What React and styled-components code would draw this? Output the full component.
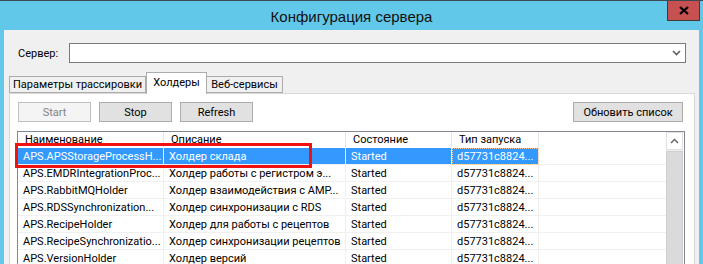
import React from 'react'
import styled, { createGlobalStyle } from 'styled-components'

const GlobalStyle = createGlobalStyle`
body {
  margin: 0;
  font-family: Roboto, "Liberation Sans", Arial, sans-serif;
}
`

const Window = styled.div`
width: 703px;
height: 264px;
overflow: hidden;
background: #62c8e9;
border-top: 1px solid #3c4a50;
box-sizing: border-box;
display: flex;
flex-direction: column;
`
const TitleBar = styled.div`
height: 29px;
display: grid;
grid-template-columns: 1fr auto 1fr;
flex-shrink: 0;
`
const Title = styled.div`
grid-column: 2;
align-self: center;
font-family: "Liberation Sans", Arial, sans-serif;
font-size: 15px;
color: #111;
padding-top: 1px;
`
const CloseButton = styled.div`
grid-column: 3;
justify-self: end;
align-self: start;
width: 31px;
height: 19px;
margin-right: 3px;
background: #c75050;
border: 1px solid #3b3b3b;
border-top: none;
display: flex;
align-items: center;
justify-content: center;
`
const Client = styled.div`
flex: 1;
margin: 0 4px;
background: #f0f0f0;
padding-top: 13px;
display: flex;
flex-direction: column;
font-size: 11px;
color: #000;
`
const ServerRow = styled.div`
display: grid;
grid-template-columns: 51px 1fr;
align-items: center;
padding: 0 13px 0 14px;
`
const Label = styled.span`
font-size: 11px;
`
const Combo = styled.div`
height: 18px;
border: 1px solid #7a7a7a;
background: #fff;
display: flex;
justify-content: flex-end;
align-items: center;
padding-right: 4px;
`
const TabStrip = styled.div`
display: flex;
align-items: flex-end;
height: 21px;
margin-top: 9px;
padding-left: 5px;
position: relative;
z-index: 1;
`
const Tab = styled.div`
box-sizing: border-box;
width: ${p => p.w}px;
height: ${p => (p.active ? 22 : 17)}px;
margin-bottom: ${p => (p.active ? -1 : 0)}px;
border: 1px solid #acacac;
border-bottom: ${p => (p.active ? 'none' : '1px solid #acacac')};
border-left: ${p => (p.first || p.active ? '1px solid #acacac' : 'none')};
background: ${p => (p.active ? '#ffffff' : '#f0f0f0')};
font-size: 11px;
white-space: nowrap;
display: flex;
align-items: ${p => (p.active ? 'flex-start' : 'center')};
padding-top: ${p => (p.active ? 3 : 0)}px;
justify-content: center;
`
const Panel = styled.div`
flex: 1;
margin: 0 4px 0 5px;
border: 1px solid #d9d9d9;
border-bottom: none;
background: #ffffff;
padding: 8px 9px 0 7px;
display: flex;
flex-direction: column;
`
const Toolbar = styled.div`
display: flex;
gap: 8px;
margin: 0 2px 0 1px;
`
const Spacer = styled.div`
flex: 1;
`
const Button = styled.div`
box-sizing: border-box;
width: ${p => p.w || 73}px;
height: 20px;
border: 1px solid ${p => (p.disabled ? '#bfbfbf' : '#adadad')};
background: ${p => (p.disabled ? '#f4f4f4' : '#e1e1e1')};
color: ${p => (p.disabled ? '#838383' : '#000')};
font-size: 11px;
white-space: nowrap;
display: flex;
align-items: center;
justify-content: center;
`
const ListWrap = styled.div`
position: relative;
margin-top: 9px;
flex: 1;
`
const List = styled.div`
height: 100%;
border: 1px solid #828790;
border-bottom: none;
background: #fff;
display: flex;
`
const Table = styled.div`
flex: 1;
`
const Row = styled.div`
display: grid;
grid-template-columns: 146px 182px 106px 87px 1fr;
height: ${p => (p.header ? 16 : 17)}px;
`
const Cell = styled.div`
box-sizing: border-box;
padding-left: ${p => (p.header ? 7 : 5)}px;
border-right: 1px solid ${p => (p.header ? '#e5e5e5' : '#f0f0f0')};
border-bottom: 1px solid ${p => (p.header ? 'transparent' : '#f0f0f0')};
background: ${p => (p.selected ? '#3399ff' : '#fff')};
color: ${p => (p.selected ? '#fff' : '#000')};
font-size: 11px;
white-space: nowrap;
overflow: hidden;
display: flex;
align-items: center;
outline: ${p => (p.focus ? '1px dotted #ffc890' : 'none')};
outline-offset: -1px;
`
const Filler = styled.div`
border-bottom: 1px solid ${p => (p.header ? 'transparent' : '#f0f0f0')};
`
const ScrollBar = styled.div`
width: 17px;
margin-right: 1px;
background: #f0f0f0;
display: flex;
flex-direction: column;
`
const ArrowBox = styled.div`
height: 16px;
border: 1px solid #e0e0e0;
background: #fff;
display: flex;
align-items: center;
justify-content: center;
`
const Thumb = styled.div`
flex: 1;
margin: 1px 0 0 0;
background: #dadada;
border: 1px solid #cfcfcf;
`
const Highlight = styled.div`
position: absolute;
left: -2px;
top: 12px;
width: 297px;
height: 25px;
box-sizing: border-box;
border: 3px solid #f01010;
pointer-events: none;
`

const rows = [
  ['APS.APSStorageProcessH...', 'Холдер склада'],
  ['APS.EMDRIntegrationProc...', 'Холдер работы с регистром э...'],
  ['APS.RabbitMQHolder', 'Холдер взаимодействия с AMP...'],
  ['APS.RDSSynchronization...', 'Холдер синхронизации с RDS'],
  ['APS.RecipeHolder', 'Холдер для работы с рецептов'],
  ['APS.RecipeSynchronizatio...', 'Холдер синхронизации рецептов'],
  ['APS.VersionHolder', 'Холдер версий'],
]

export default function App() {
  return (
    <>
      <GlobalStyle />
      <Window>
        <TitleBar>
          <Title>Конфигурация сервера</Title>
          <CloseButton>
            <svg width="10" height="9" viewBox="0 0 10 9">
              <path d="M1 1 L9 8 M9 1 L1 8" stroke="#000" strokeWidth="2.2" />
            </svg>
          </CloseButton>
        </TitleBar>
        <Client>
          <ServerRow>
            <Label>Сервер:</Label>
            <Combo>
              <svg width="9" height="6" viewBox="0 0 9 6">
                <path d="M1 1 L4.5 4.5 L8 1" stroke="#606060" strokeWidth="1.6" fill="none" />
              </svg>
            </Combo>
          </ServerRow>
          <TabStrip>
            <Tab w={137} first>Параметры трассировки</Tab>
            <Tab w={61} active>Холдеры</Tab>
            <Tab w={76}>Веб-сервисы</Tab>
          </TabStrip>
          <Panel>
            <Toolbar>
              <Button disabled>Start</Button>
              <Button>Stop</Button>
              <Button>Refresh</Button>
              <Spacer />
              <Button w={110}>Обновить список</Button>
            </Toolbar>
            <ListWrap>
              <List>
                <Table>
                  <Row header>
                    <Cell header>Наименование</Cell>
                    <Cell header>Описание</Cell>
                    <Cell header>Состояние</Cell>
                    <Cell header>Тип запуска</Cell>
                    <Filler header />
                  </Row>
                  {rows.map((r, i) => (
                    <Row key={r[0]}>
                      <Cell selected={i === 0}>{r[0]}</Cell>
                      <Cell selected={i === 0}>{r[1]}</Cell>
                      <Cell selected={i === 0}>Started</Cell>
                      <Cell selected={i === 0} focus={i === 0}>d57731c8824...</Cell>
                      <Filler />
                    </Row>
                  ))}
                </Table>
                <ScrollBar>
                  <ArrowBox>
                    <svg width="9" height="6" viewBox="0 0 9 6">
                      <path d="M1 5 L4.5 1.5 L8 5" stroke="#606060" strokeWidth="1.3" fill="none" />
                    </svg>
                  </ArrowBox>
                  <Thumb />
                </ScrollBar>
              </List>
              <Highlight />
            </ListWrap>
          </Panel>
        </Client>
      </Window>
    </>
  )
}
